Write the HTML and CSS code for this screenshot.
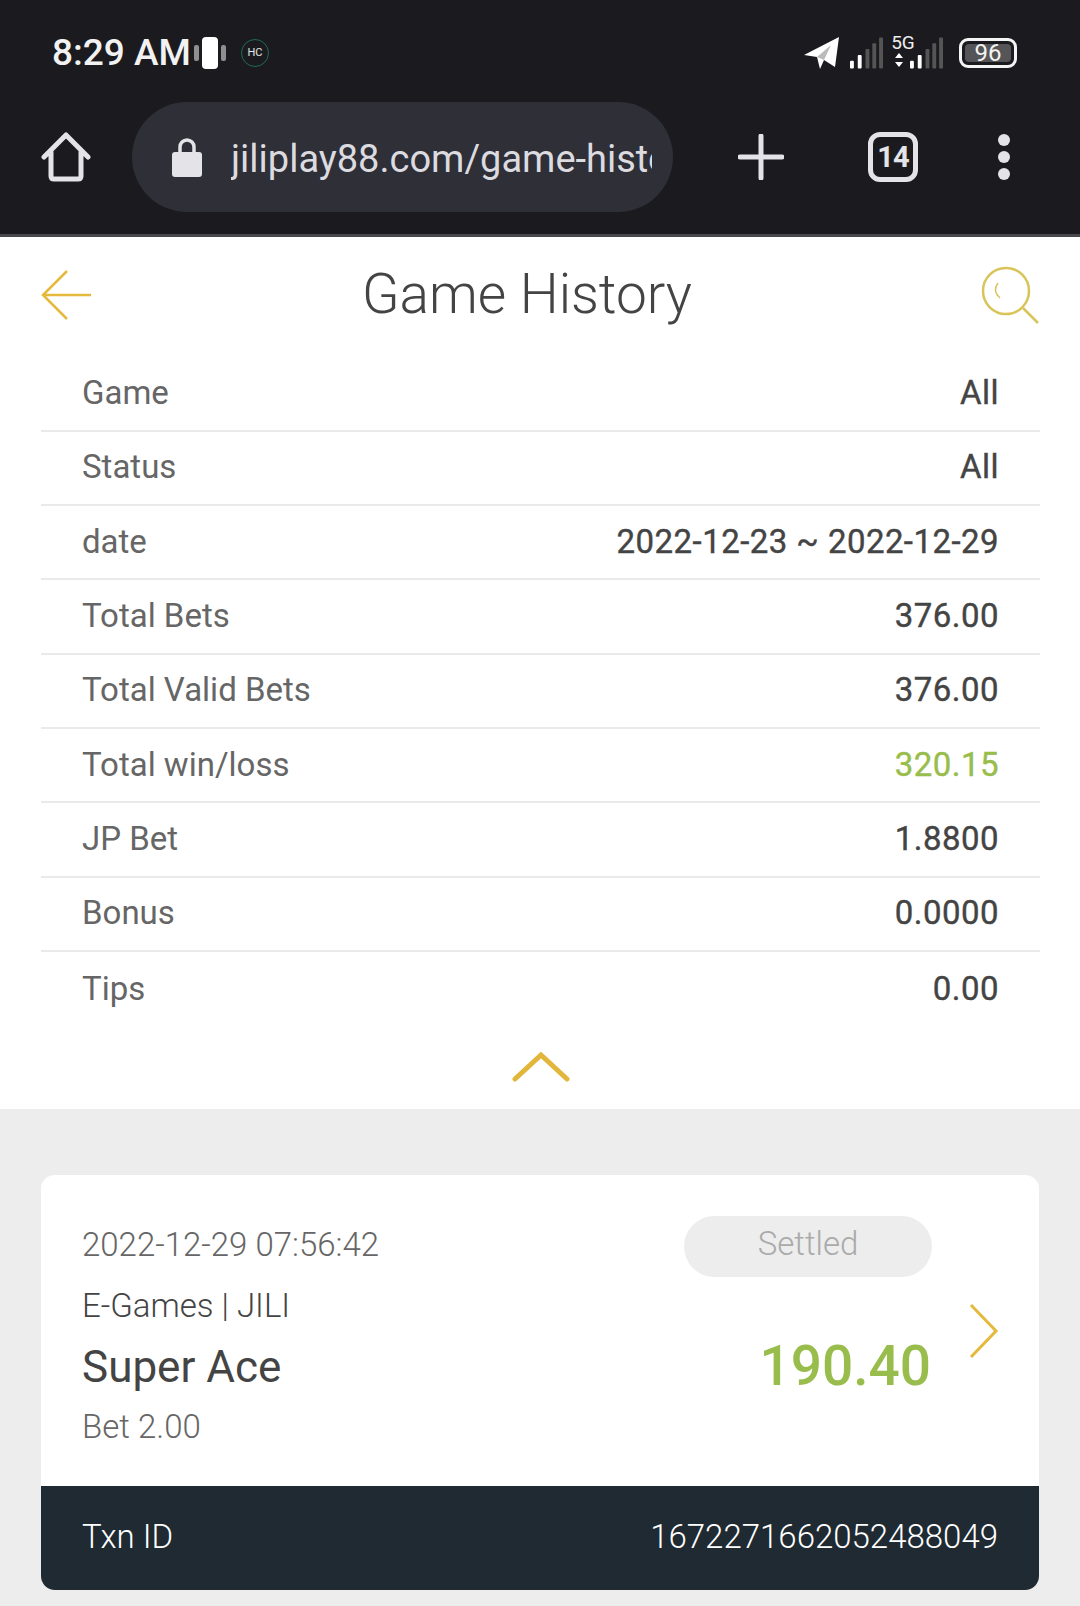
FILE: index.html
```html
<!DOCTYPE html>
<html lang="en">
<head>
  <meta charset="UTF-8" />
  <title>Game History</title>
  <link rel="stylesheet" href="styles.css">
</head>
<body>

  <!-- Phone status bar + browser toolbar -->
  <div class="top">
    <div class="status">
      <div class="status-left">
        <span class="time">8:29 AM</span>
        <svg class="vibrate" width="32" height="32" viewBox="0 0 32 32">
          <rect x="0" y="8" width="5" height="16" rx="2" fill="#8f8f90"/>
          <rect x="8" y="0" width="16" height="32" rx="4" fill="#fff"/>
          <rect x="27" y="8" width="5" height="16" rx="2" fill="#8f8f90"/>
        </svg>
        <span class="hc">HC</span>
      </div>
      <div class="status-right">
        <svg width="36" height="34" viewBox="0 0 36 34">
          <path d="M0 19 L35 1 L31 31 L20 24 L16 33 L13 21 Z" fill="#fff"/>
          <path d="M13 21 L27 9 L20 24 Z" fill="#bbb"/>
        </svg>
        <svg class="signal" width="33" height="32" viewBox="0 0 34 32">
          <rect x="0" y="24" width="4" height="8" rx="1" fill="#fff"/>
          <rect x="8" y="18" width="4" height="14" rx="1" fill="#fff"/>
          <rect x="16" y="12" width="4" height="20" rx="1" fill="#555"/>
          <rect x="23" y="6" width="4" height="26" rx="1" fill="#555"/>
          <rect x="30" y="0" width="4" height="32" rx="1" fill="#555"/>
        </svg>
        <div class="net">
          <span class="net-label">5G</span>
          <svg width="8" height="14" viewBox="0 0 8 14">
            <path d="M4 0 L8 5 H0 Z M0 9 H8 L4 14 Z" fill="#fff"/>
          </svg>
        </div>
        <svg class="signal" width="33" height="32" viewBox="0 0 34 32">
          <rect x="0" y="24" width="4" height="8" rx="1" fill="#fff"/>
          <rect x="8" y="18" width="4" height="14" rx="1" fill="#fff"/>
          <rect x="16" y="12" width="4" height="20" rx="1" fill="#555"/>
          <rect x="23" y="6" width="4" height="26" rx="1" fill="#555"/>
          <rect x="30" y="0" width="4" height="32" rx="1" fill="#555"/>
        </svg>
        <div class="battery"><span>96</span></div>
      </div>
    </div>

    <div class="toolbar">
      <svg class="home" width="50" height="50" viewBox="0 0 50 50">
        <path d="M3 25 L25 3 L47 25 M10 20 V44 Q10 47 13 47 H37 Q40 47 40 44 V20" fill="none" stroke="#e4e3e8" stroke-width="5" stroke-linecap="round" stroke-linejoin="round"/>
      </svg>
      <div class="url-pill">
        <svg width="30" height="40" viewBox="0 0 30 40">
          <path d="M8 17 V10 a7 7 0 0 1 14 0 V17" fill="none" stroke="#e4e3e8" stroke-width="3.5"/>
          <rect x="0" y="15" width="30" height="25" rx="3" fill="#e4e3e8"/>
        </svg>
        <div class="url">jiliplay88.com/game-history</div>
      </div>
      <svg class="plus" width="46" height="46" viewBox="0 0 46 46">
        <path d="M2 23 H44 M23 2 V44" stroke="#e4e3e8" stroke-width="5" stroke-linecap="round"/>
      </svg>
      <div class="tabs">14</div>
      <div class="dots"><i></i><i></i><i></i></div>
    </div>
  </div>

  <!-- Header -->
  <div class="header">
    <svg width="52" height="52" viewBox="0 0 52 52">
      <path d="M50 26 H3 M26 2 L2 26 L26 50" fill="none" stroke="#e5b93c" stroke-width="2.5"/>
    </svg>
    <h1>Game History</h1>
    <svg width="58" height="58" viewBox="0 0 58 58">
      <circle cx="25" cy="25" r="23" fill="none" stroke="#d9c45a" stroke-width="2.5"/>
      <path d="M42 42 L57 57" stroke="#d9c45a" stroke-width="2.5"/>
      <path d="M17 17 Q11 25 19 32" fill="none" stroke="#d9c45a" stroke-width="1.5"/>
    </svg>
  </div>

  <!-- Summary -->
  <div class="summary">
    <div class="row"><span>Game</span><b>All</b></div>
    <div class="row"><span>Status</span><b>All</b></div>
    <div class="row"><span>date</span><b>2022-12-23 ~ 2022-12-29</b></div>
    <div class="row"><span>Total Bets</span><b>376.00</b></div>
    <div class="row"><span>Total Valid Bets</span><b>376.00</b></div>
    <div class="row"><span>Total win/loss</span><b class="green">320.15</b></div>
    <div class="row"><span>JP Bet</span><b>1.8800</b></div>
    <div class="row"><span>Bonus</span><b>0.0000</b></div>
    <div class="row"><span>Tips</span><b>0.00</b></div>
  </div>
  <div class="collapse">
    <svg width="58" height="30" viewBox="0 0 58 30">
      <path d="M3 27 L29 3 L55 27" fill="none" stroke="#e2b63a" stroke-width="5" stroke-linecap="round"/>
    </svg>
  </div>

  <!-- List -->
  <div class="list">
    <div class="card">
      <div class="card-body">
        <div class="card-info">
          <div class="card-date">2022-12-29 07:56:42</div>
          <div class="card-type">E-Games | JILI</div>
          <div class="card-name">Super Ace</div>
          <div class="card-bet">Bet 2.00</div>
        </div>
        <div class="card-result">
          <div class="pill">Settled</div>
          <div class="amount">190.40</div>
        </div>
        <svg class="chevron" width="30" height="56" viewBox="0 0 30 56">
          <path d="M2 2 L27 28 L2 54" fill="none" stroke="#e5b93c" stroke-width="3"/>
        </svg>
      </div>
      <div class="txn">
        <span>Txn ID</span>
        <span>1672271662052488049</span>
      </div>
    </div>
  </div>

</body>
</html>
```

FILE: styles.css
```css
html, body {
  margin: 0;
  padding: 0;
}

body {
  width: 1080px;
  height: 1606px;
  overflow: hidden;
  font-family: 'Roboto', sans-serif;
  background: #ededed;
  color: #444;
}

.top {
  height: 234px;
  background: #1b1b1f;
  border-bottom: 3px solid #48484c;
  color: #fff;
}

.status {
  height: 102px;
  padding: 3px 63px 0 52px;
  display: flex;
  justify-content: space-between;
  align-items: center;
  box-sizing: border-box;
}

.status-left, .status-right {
  display: flex;
  align-items: center;
}

.time {
  font-size: 37px;
  font-weight: 500;
  color: #f2f2f2;
}

.vibrate {
  margin-left: 3px;
}

.hc {
  width: 26px;
  height: 26px;
  margin-left: 15px;
  border: 1px solid #1f6b55;
  border-radius: 50%;
  font-size: 11px;
  line-height: 26px;
  text-align: center;
  color: #e6e6e6;
}

.status-right .signal {
  margin-left: 10px;
}

.net {
  width: 24px;
  margin-left: 8px;
  margin-right: -5px;
  display: flex;
  flex-direction: column;
  align-items: center;
  gap: 1px;
  position: relative;
  top: -2px;
}

.net-label {
  font-size: 19px;
  line-height: 18px;
  color: #eee;
}

.net svg {
  margin-right: 8px;
}

.status-right .net + .signal {
  margin-left: 0;
}

.battery {
  width: 58px;
  height: 30px;
  margin-left: 16px;
  padding: 3px;
  box-sizing: border-box;
  border: 3px solid #f4f4f4;
  border-radius: 9px;
}

.battery span {
  display: block;
  height: 100%;
  border-radius: 4px;
  background: #555558;
  font-size: 24px;
  line-height: 18px;
  text-align: center;
  color: #f2f2f2;
}

.toolbar {
  height: 110px;
  padding-left: 41px;
  display: flex;
  align-items: center;
}

.url-pill {
  width: 541px;
  height: 110px;
  margin-left: 41px;
  padding-left: 40px;
  box-sizing: border-box;
  border-radius: 55px;
  background: #2e2f37;
  display: flex;
  align-items: center;
  gap: 29px;
}

.url {
  width: 421px;
  padding-top: 4px;
  overflow: hidden;
  white-space: nowrap;
  font-size: 38px;
  color: #dcdbe0;
}

.plus {
  margin-left: 65px;
}

.tabs {
  width: 50px;
  height: 50px;
  margin-left: 84px;
  box-sizing: border-box;
  border: 5px solid #e4e3e8;
  border-radius: 12px;
  font-size: 29px;
  font-weight: 700;
  letter-spacing: -1px;
  line-height: 40px;
  text-align: center;
  color: #e4e3e8;
}

.dots {
  margin-left: 80px;
  display: flex;
  flex-direction: column;
  gap: 5px;
}

.dots i {
  width: 12px;
  height: 12px;
  border-radius: 50%;
  background: #e4e3e8;
}

.header {
  height: 120px;
  padding: 0 41px 5px;
  box-sizing: border-box;
  background: #fff;
  display: flex;
  justify-content: space-between;
  align-items: center;
}

.header h1 {
  margin: 0 20px 2px 0;
  font-size: 55px;
  font-weight: 300;
  color: #444;
}

.summary {
  padding: 0.5px 40px 0 41px;
  background: #fff;
}

.row {
  height: 74.3px;
  padding: 0 41px 2px;
  box-sizing: border-box;
  border-bottom: 2px solid #eaeaea;
  display: flex;
  justify-content: space-between;
  align-items: center;
  font-size: 33px;
}

.row:last-child {
  border-bottom: none;
}

.row span {
  color: #666;
}

.row b {
  font-weight: 400;
  letter-spacing: 0.45px;
  color: #444;
  -webkit-text-stroke: 0.4px #444;
}

.row b.green {
  color: #98bd4c;
  -webkit-text-stroke: 0.4px #98bd4c;
}

.collapse {
  height: 82.5px;
  box-sizing: border-box;
  padding: 26px 0 0 2px;
  background: #fff;
  display: flex;
  justify-content: center;
  align-items: flex-start;
}

.list {
  padding: 66px 41px 0;
}

.card {
  border-radius: 14px;
  background: #fff;
  overflow: hidden;
}

.card-body {
  height: 311px;
  padding: 0 40px 0 41px;
  display: flex;
  align-items: center;
}

.card-info {
  flex: 1;
  align-self: flex-start;
  padding-top: 50px;
}

.card-date {
  font-size: 33px;
  font-weight: 300;
  color: #666;
}

.card-type {
  margin-top: 22px;
  font-size: 33px;
  font-weight: 300;
  color: #444;
}

.card-name {
  margin-top: 16px;
  font-size: 44px;
  color: #444;
}

.card-bet {
  margin-top: 14px;
  font-size: 33px;
  font-weight: 300;
  color: #666;
}

.card-result {
  width: 248px;
  align-self: flex-start;
  padding-top: 41px;
  display: flex;
  flex-direction: column;
  align-items: flex-end;
}

.pill {
  width: 248px;
  height: 61px;
  border-radius: 31px;
  background: #ededed;
  font-size: 33px;
  font-weight: 300;
  line-height: 56px;
  text-align: center;
  color: #aaa;
}

.amount {
  margin-top: 57px;
  padding-right: 1px;
  font-size: 55px;
  font-weight: 500;
  color: #98bd4c;
}

.chevron {
  margin-left: 37px;
  margin-top: 2px;
}

.txn {
  height: 104px;
  padding: 0 41px 2px;
  box-sizing: border-box;
  background: #1f2a32;
  display: flex;
  justify-content: space-between;
  align-items: center;
  font-size: 33px;
  font-weight: 300;
  color: #fff;
}
```
